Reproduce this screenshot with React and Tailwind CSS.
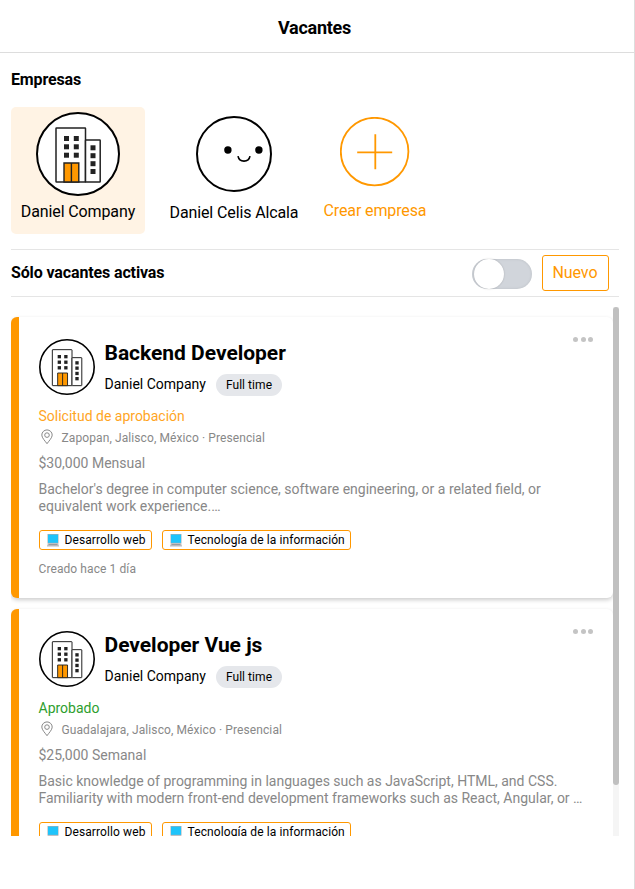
function BuildingLogo({ size, ring }) {
  return (
    <svg width={size} height={size} viewBox="0 0 84 84" className="block shrink-0">
      <circle cx="42" cy="42" r={42 - ring / 2} fill="#fff" stroke="#000" strokeWidth={ring} />
      <g fill="#fff" stroke="#222" strokeWidth="1.5">
        <rect x="20" y="16" width="29.5" height="54" rx="0.5" />
        <rect x="49.5" y="28" width="14.7" height="42" rx="0.5" />
      </g>
      <g fill="#222">
        {[24, 32.3, 40.7].map((y) => (
          <g key={y}>
            <rect x="28" y={y} width="5" height="5" />
            <rect x="37.8" y={y} width="5" height="5" />
          </g>
        ))}
        {[33.3, 41.2, 49.2, 57].map((y) => (
          <rect key={y} x="54.5" y={y} width="5" height="5" />
        ))}
      </g>
      <path d="M28 51h14.8v19H28zM35.4 51v19" fill="#ff9800" stroke="#222" strokeWidth="1.4" />
    </svg>
  );
}

function Face() {
  return (
    <svg width="76" height="76" viewBox="0 0 76 76" className="block">
      <circle cx="38" cy="38" r="37" fill="#fff" stroke="#000" strokeWidth="2" />
      <circle cx="31.9" cy="34" r="3.7" />
      <circle cx="62.9" cy="34" r="3.7" />
      <path d="M42 40.2c1.2 6.5 10.800 6.500 12 0" fill="none" stroke="#000" strokeWidth="1.6" />
    </svg>
  );
}

function PlusCircle() {
  return (
    <svg width="70" height="70" viewBox="0 0 70 70" className="block" fill="none" stroke="#ff9800">
      <circle cx="34.600" cy="34.600" r="33.800" strokeWidth="1.8" />
      <path d="M17.200 35.300h35M35.300 17.200v35" strokeWidth="1.8" />
    </svg>
  );
}

function Pin() {
  return (
    <svg width="16" height="16" viewBox="0 0 16 16" fill="none" stroke="#888" strokeWidth="1" className="shrink-0">
      <path d="M8 14.700C6.300 12.200 2.800 8.800 2.800 6.100a5.200 5.200 0 0 1 10.400 0c0 2.700-3.500 6.100-5.200 8.600z" />
      <circle cx="8" cy="6.100" r="2.300" />
    </svg>
  );
}

function Laptop() {
  return (
    <svg width="12" height="13" viewBox="0 0 12 13" className="shrink-0">
      <rect x="0.500" y="0" width="11" height="9.500" fill="#a8adb3" />
      <rect x="1" y="0.600" width="10" height="8.200" fill="#1fc4fb" />
      <path d="M1 9.300h10l1 2.700H0z" fill="#b9b9bc" />
      <path d="M2 10h8l.4 1H1.600z" fill="#999ba0" />
      <path d="M0 12h12v.8H0z" fill="#d3d3d6" />
    </svg>
  );
}

function Tag({ children, className }) {
  return (
    <span
      className={
        "flex h-5 items-center gap-[5.500px] rounded-[3px] border border-[#ff9800] pl-[7px] text-xs leading-[18px] tracking-[0.1px] whitespace-nowrap text-black " +
        className
      }
    >
      <Laptop />
      {children}
    </span>
  );
}

function JobCard({ title, status, statusClass, place, salary, lines, created }) {
  return (
    <article className="h-[281px] shrink-0 rounded-md border-l-8 border-[#ff9800] bg-white pt-[17px] pr-5 pl-[19.500px] shadow-[0_2px_4px_rgba(0,0,0,0.2)]">
      <div className="flex">
        <div className="mt-[5px] ml-[0.500px]">
          <BuildingLogo size={56} ring={2.4} />
        </div>
        <div className="ml-[9.500px] flex-1">
          <h2 className="mt-1 text-[21px] leading-[30px] font-bold tracking-[-0.02px]">{title}</h2>
          <div className="mt-[6px] flex h-[22px] items-center gap-[10px]">
            <span className="-mt-[2px] w-[101.500px] text-sm leading-5 whitespace-nowrap">Daniel Company</span>
            <span className="h-[22px] w-[66px] rounded-full bg-[#e5e7eb] text-center text-xs leading-[22px] tracking-[0.05px]">
              Full time
            </span>
          </div>
        </div>
        <div className="mt-[3px] flex h-[5px] gap-[2.5px]">
          <i className="size-[5px] rounded-full bg-[#c4c4c4]" />
          <i className="size-[5px] rounded-full bg-[#c4c4c4]" />
          <i className="size-[5px] rounded-full bg-[#c4c4c4]" />
        </div>
      </div>
      <p className={"mt-[10px] text-sm leading-5 " + statusClass}>{status}</p>
      <div className="mt-[3px] flex h-4 items-center gap-[7px] text-xs leading-4 text-[#888]">
        <Pin />
        <span className="pt-[2px] tracking-[0.1px]">{place}</span>
      </div>
      <p className="mt-2 text-sm leading-5 text-[#888]">{salary}</p>
      <p className="mt-2 text-sm leading-[17px] whitespace-nowrap text-[#888]">
        {lines[0]}
        <br />
        {lines[1]}
      </p>
      <div className="mt-[15px] ml-[0.500px] flex gap-[10px]">
        <Tag className="w-[113px]">Desarrollo web</Tag>
        <Tag className="w-[189px]">Tecnología de la información</Tag>
      </div>
      {created && <p className="mt-[11px] text-xs leading-4 tracking-[0.09px] text-[#888]">{created}</p>}
    </article>
  );
}

export default function App() {
  return (
    <main className="h-[889px] w-[635px] overflow-hidden border-r border-[#ddd] bg-white font-[Roboto,sans-serif] text-black">
      <header className="flex h-[53px] items-center justify-center border-b border-[#ddd] pt-[3px] pr-[5px] text-lg font-bold tracking-[-0.25px]">
        Vacantes
      </header>
      <div className="pr-[15px] pl-[11px]">
        <h3 className="pt-[15px] text-base leading-6 font-bold tracking-[-0.15px]">Empresas</h3>
        <div className="mt-[15px] flex gap-[15px] leading-6 tracking-[-0.12px] whitespace-nowrap">
          <div className="flex h-[127px] w-[134px] flex-col items-center rounded-[5px] bg-[#fff3e4] pt-[5px]">
            <BuildingLogo size={84} ring={2} />
            <span className="mt-1">Daniel Company</span>
          </div>
          <div className="flex w-[148px] flex-col items-center pt-[9px]">
            <Face />
            <span className="mt-[9px]">Daniel Celis Alcala</span>
          </div>
          <div className="flex w-[104px] flex-col items-center pt-[10px] text-[#ff9800]">
            <PlusCircle />
            <span className="mt-3">Crear empresa</span>
          </div>
        </div>
        <div className="mt-[15px] flex h-12 items-center border-y border-[#e5e5e5] pr-[10px]">
          <h3 className="flex-1 text-base leading-6 font-bold tracking-[-0.13px]">Sólo vacantes activas</h3>
          <div className="mt-[2px] mr-[10px] h-[30px] w-[60px] rounded-full bg-[#d1d5db] pl-[2px] shadow-[inset_0_0_3px_rgba(0,0,0,0.1)]">
            <div className="size-[30px] rounded-full bg-white shadow-[0_0_2px_rgba(0,0,0,0.2)]" />
          </div>
          <button className="h-9 w-[67px] rounded-[3px] border border-[#ff9800] pr-[1px] text-base tracking-[-0.1px] text-[#ff9800]">
            Nuevo
          </button>
        </div>
        <div className="mt-[10px] flex h-[529px]">
          <div className="flex w-[602px] flex-col gap-[11px] overflow-hidden pt-[10px]">
            <JobCard
              title="Backend Developer"
              status="Solicitud de aprobación"
              statusClass="text-[#ffa51f]"
              place="Zapopan, Jalisco, México · Presencial"
              salary="$30,000 Mensual"
              lines={[
                "Bachelor's degree in computer science, software engineering, or a related field, or",
                "equivalent work experience.…",
              ]}
              created="Creado hace 1 día"
            />
            <JobCard
              title="Developer Vue js"
              status="Aprobado"
              statusClass="text-[#2e9e2e]"
              place="Guadalajara, Jalisco, México · Presencial"
              salary="$25,000 Semanal"
              lines={[
                "Basic knowledge of programming in languages such as JavaScript, HTML, and CSS.",
                "Familiarity with modern front-end development frameworks such as React, Angular, or …",
              ]}
            />
          </div>
          <div className="w-[6px] bg-[#f5f5f5]">
            <div className="h-[478px] rounded-[3px] bg-[#c0c0c0]" />
          </div>
        </div>
      </div>
    </main>
  );
}
